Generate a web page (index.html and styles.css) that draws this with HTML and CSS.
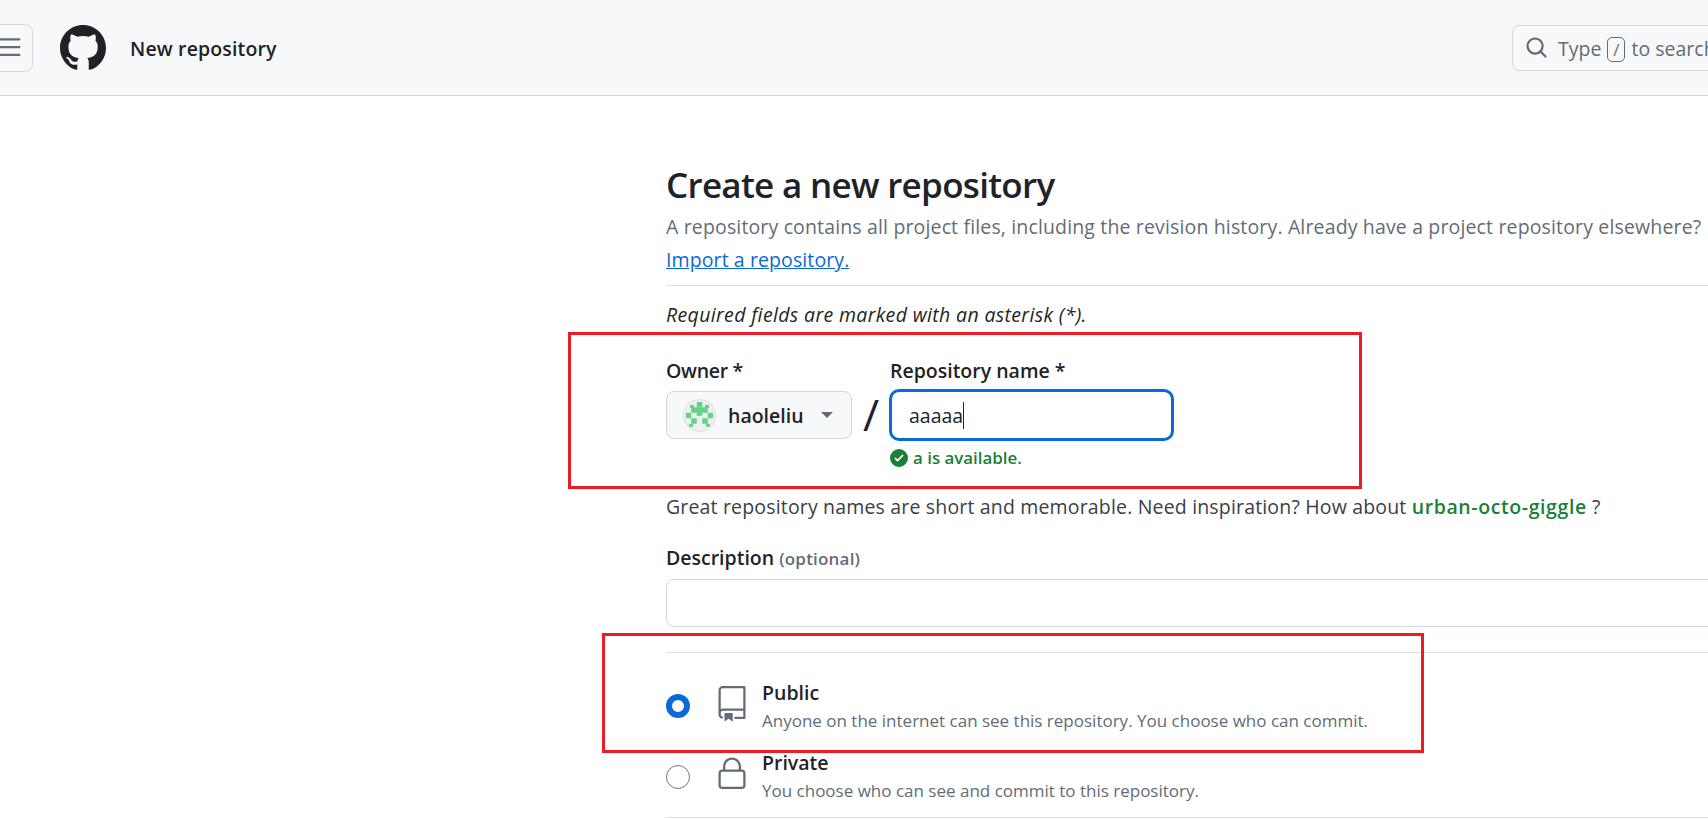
FILE: index.html
```html
<!DOCTYPE html>
<html lang="en">
<head>
    <meta charset="UTF-8">
    <meta name="viewport" content="width=device-width, initial-scale=1.0">
    <title>New repository</title>
    <link rel="stylesheet" href="styles.css">
</head>
<body>
    <header class="topbar">
        <button class="menu-btn" type="button" aria-label="Open menu">
            <svg width="25" height="25" viewBox="0 0 16 16"><path d="M1 2.75A.75.75 0 0 1 1.75 2h12.5a.75.75 0 0 1 0 1.5H1.75A.75.75 0 0 1 1 2.75Zm0 5A.75.75 0 0 1 1.75 7h12.5a.75.75 0 0 1 0 1.5H1.75A.75.75 0 0 1 1 7.75ZM1.75 12h12.5a.75.75 0 0 1 0 1.5H1.75a.75.75 0 0 1 0-1.5Z"/></svg>
        </button>
        <svg class="logo" width="46" height="46" viewBox="0 0 16 16"><path d="M8 0c4.42 0 8 3.58 8 8a8.013 8.013 0 0 1-5.45 7.59c-.4.08-.55-.17-.55-.38 0-.27.01-1.13.01-2.2 0-.75-.25-1.23-.54-1.48 1.78-.2 3.65-.88 3.65-3.95 0-.88-.31-1.59-.82-2.15.08-.2.36-1.02-.08-2.12 0 0-.67-.22-2.2.82-.64-.18-1.32-.27-2-.27-.68 0-1.36.09-2 .27-1.53-1.03-2.2-.82-2.2-.82-.44 1.1-.16 1.92-.08 2.12-.51.56-.82 1.28-.82 2.15 0 3.06 1.86 3.75 3.64 3.95-.23.2-.44.55-.51 1.07-.46.21-1.61.55-2.33-.66-.15-.24-.6-.83-1.23-.82-.67.01-.27.38.01.53.34.19.73.9.82 1.13.16.45.68 1.31 2.69.94 0 .67.01 1.3.01 1.49 0 .21-.15.45-.55.38A7.995 7.995 0 0 1 0 8c0-4.42 3.58-8 8-8Z"/></svg>
        <span class="page-title">New repository</span>
        <div class="search">
            <svg width="23" height="23" viewBox="0 0 16 16"><path d="M10.68 11.74a6 6 0 0 1-7.922-8.982 6 6 0 0 1 8.982 7.922l3.04 3.04a.749.749 0 0 1-.326 1.275.749.749 0 0 1-.734-.215ZM11.5 7a4.499 4.499 0 1 0-8.997 0A4.499 4.499 0 0 0 11.5 7Z"/></svg>
            <span class="search-text">Type <kbd class="slash-key">/</kbd> to search</span>
        </div>
    </header>

    <main class="container">
        <h1>Create a new repository</h1>
        <p class="subhead">A repository contains all project files, including the revision history. Already have a project repository elsewhere?</p>
        <a class="import-link" href="#">Import a repository.</a>
        <hr class="divider divider-top">
        <p class="required-note">Required fields are marked with an asterisk (*).</p>

        <div class="name-row">
            <div class="owner-col">
                <label class="field-label field-owner">Owner *</label>
                <div class="owner-select">
                    <svg class="identicon" width="33" height="33" viewBox="0 0 33 33">
                        <circle cx="16.5" cy="16.5" r="16" fill="#f0f0f0" stroke="#dcdcdc"/>
                        <g fill="#62d384">
                            <rect x="13.75" y="3" width="5.5" height="5.25"/>
                            <rect x="7" y="6" width="4" height="3"/>
                            <rect x="22" y="6" width="4" height="3"/>
                            <rect x="8.25" y="8.25" width="16.5" height="5.5"/>
                            <rect x="3" y="13.75" width="5.25" height="5.5"/>
                            <rect x="24.75" y="13.75" width="5.25" height="5.5"/>
                            <rect x="13.75" y="13.75" width="5.5" height="3"/>
                            <rect x="8.25" y="19.25" width="5.5" height="5.5"/>
                            <rect x="19.25" y="19.25" width="5.5" height="5.5"/>
                            <rect x="6" y="24.75" width="4" height="3"/>
                            <rect x="23" y="24.75" width="4" height="3"/>
                        </g>
                    </svg>
                    <span class="owner-name">haoleliu</span>
                    <span class="caret-down"></span>
                </div>
            </div>
            <span class="slash">/</span>
            <div class="repo-col">
                <label class="field-label">Repository name *</label>
                <div class="text-input text-input-focus"><span class="typed">aaaaa</span></div>
                <div class="available">
                    <svg width="18" height="18" viewBox="0 0 16 16"><path d="M8 16A8 8 0 1 1 8 0a8 8 0 0 1 0 16Zm3.78-9.72a.751.751 0 0 0-.018-1.042.751.751 0 0 0-1.042-.018L6.75 9.19 5.28 7.72a.751.751 0 0 0-1.042.018.751.751 0 0 0-.018 1.042l2 2a.75.75 0 0 0 1.06 0Z"/></svg>
                    a is available.
                </div>
            </div>
        </div>

        <p class="hint">Great repository names are short and memorable. Need inspiration? How about <strong>urban-octo-giggle</strong> ?</p>

        <label class="field-label desc-label">Description <span class="optional">(optional)</span></label>
        <div class="text-input desc-input"></div>
        <hr class="divider divider-mid">

        <div class="visibility visibility-public">
            <span class="radio radio-on"></span>
            <svg class="vis-icon" width="36" height="36" viewBox="0 0 24 24"><path d="M3 2.75A2.75 2.75 0 0 1 5.75 0h14.5a.75.75 0 0 1 .75.75v20.5a.75.75 0 0 1-.75.75h-6a.75.75 0 0 1 0-1.5h5.25v-4H6A1.5 1.5 0 0 0 4.5 18v.75c0 .716.43 1.334 1.05 1.605a.75.75 0 0 1-.6 1.374A3.251 3.251 0 0 1 3 18.75ZM19.5 1.5H5.75c-.69 0-1.25.56-1.25 1.25v12.651A2.989 2.989 0 0 1 6 15h13.5Z"/><path d="M7 18.25a.25.25 0 0 1 .25-.25h5a.25.25 0 0 1 .25.25v5.01a.25.25 0 0 1-.397.201l-2.206-1.604a.25.25 0 0 0-.294 0L7.397 23.46a.25.25 0 0 1-.397-.2Z"/></svg>
            <div class="vis-text">
                <div class="vis-title">Public</div>
                <div class="vis-note">Anyone on the internet can see this repository. You choose who can commit.</div>
            </div>
        </div>
        <div class="visibility visibility-private">
            <span class="radio"></span>
            <svg class="vis-icon" width="36" height="36" viewBox="0 0 24 24"><path d="M6 9V7.25C6 3.845 8.503 1 12 1s6 2.845 6 6.25V9h.5a2.5 2.5 0 0 1 2.5 2.5v8a2.5 2.5 0 0 1-2.5 2.5h-13A2.5 2.5 0 0 1 3 19.5v-8A2.5 2.5 0 0 1 5.5 9Zm-1.5 2.5v8a1 1 0 0 0 1 1h13a1 1 0 0 0 1-1v-8a1 1 0 0 0-1-1h-13a1 1 0 0 0-1 1Zm3-4.25V9h9V7.25c0-2.67-1.922-4.75-4.5-4.75-2.578 0-4.5 2.08-4.5 4.75Z"/></svg>
            <div class="vis-text">
                <div class="vis-title">Private</div>
                <div class="vis-note">You choose who can see and commit to this repository.</div>
            </div>
        </div>
        <hr class="divider divider-end">
    </main>

    <div class="mark mark-name"></div>
    <div class="mark mark-visibility"></div>
</body>
</html>
```

FILE: styles.css
```css
html, body {
    height: 100%;
    overflow: hidden;
}

body {
    font-family: "Open Sans", "Noto Sans", Arial, sans-serif;
    margin: 0;
    padding: 0;
    background-color: #fff;
    color: #1f2328;
    font-size: 19.5px;
}

.topbar {
    display: flex;
    align-items: center;
    height: 95px;
    background-color: #f6f8fa;
    border-bottom: 1px solid #d0d7de;
}

.menu-btn {
    display: flex;
    align-items: center;
    justify-content: flex-end;
    flex-shrink: 0;
    width: 60px;
    height: 48px;
    margin-left: -27px;
    padding: 0 10px 0 0;
    background-color: #f6f8fa;
    border: 1px solid #d0d7de;
    border-radius: 8px;
    fill: #636c76;
}

.logo {
    flex-shrink: 0;
    margin-left: 27px;
    fill: #1f2328;
}

.page-title {
    margin-left: 24px;
    margin-top: 2px;
    font-weight: 600;
    letter-spacing: 0.15px;
}

.search {
    display: flex;
    align-items: center;
    gap: 10px;
    flex-shrink: 0;
    width: 420px;
    height: 46px;
    margin-left: auto;
    margin-right: -224px;
    padding-left: 12px;
    box-sizing: border-box;
    border: 1px solid #d0d7de;
    border-radius: 8px;
    fill: #636c76;
    color: #636c76;
}

.search-text {
    margin-top: 2px;
    white-space: nowrap;
}

.slash-key {
    display: inline-block;
    width: 18px;
    height: 25px;
    margin: 0 1px;
    line-height: 23px;
    text-align: center;
    font-family: inherit;
    font-size: 17px;
    box-sizing: border-box;
    border: 1px solid #636c76;
    border-radius: 5px;
}

.container {
    width: 1200px;
    margin-left: 666px;
}

h1 {
    margin: 64px 0 0;
    font-size: 35px;
    line-height: 50px;
    font-weight: 600;
    letter-spacing: -0.7px;
}

.subhead {
    margin: 0;
    line-height: 33px;
    color: #636c76;
    white-space: nowrap;
    letter-spacing: 0.15px;
}

.import-link {
    display: block;
    line-height: 33px;
    color: #0969da;
    letter-spacing: 0.1px;
}

.divider {
    height: 1px;
    margin: 0;
    border: none;
    background-color: #d8dee4;
}

.divider-top {
    margin-top: 9px;
}

.required-note {
    margin: 16px 0 0;
    line-height: 26px;
    font-style: italic;
    letter-spacing: 0.35px;
}

.name-row {
    display: flex;
    margin-top: 29px;
}

.field-label {
    display: block;
    line-height: 26px;
    font-weight: 600;
}

.name-row .field-label {
    line-height: 28px;
}

.field-owner {
    letter-spacing: -0.3px;
}

.owner-select {
    display: flex;
    align-items: center;
    width: 186px;
    height: 48px;
    margin-top: 6px;
    padding-left: 16px;
    box-sizing: border-box;
    background-color: #f6f8fa;
    border: 1px solid #d0d7de;
    border-radius: 8px;
}

.owner-name {
    margin-left: 12px;
    font-weight: 600;
}

.caret-down {
    width: 0;
    height: 0;
    margin-left: 17px;
    border-left: 6px solid transparent;
    border-right: 6px solid transparent;
    border-top: 6px solid #636c76;
}

.slash {
    width: 38px;
    margin-top: 33px;
    text-align: center;
    font-size: 44px;
    line-height: 48px;
}

.repo-col {
    width: 284px;
}

.text-input {
    box-sizing: border-box;
    border: 1px solid #d0d7de;
    border-radius: 8px;
    background-color: #fff;
}

.text-input-focus {
    display: flex;
    align-items: center;
    height: 52px;
    margin: 4px 0 0 -1px;
    padding-left: 17px;
    border: 3px solid #0969da;
    border-radius: 10px;
}

.typed {
    line-height: 27px;
    border-right: 1px solid #1f2328;
}

.available {
    display: flex;
    align-items: center;
    gap: 5px;
    margin-top: 6px;
    line-height: 22px;
    font-size: 16.9px;
    font-weight: 600;
    color: #1a7f37;
    fill: #1a7f37;
}

.hint {
    margin: 25px 0 0;
    line-height: 26px;
    color: #3a4047;
    letter-spacing: 0.17px;
}

.hint strong {
    color: #1a7f37;
    font-weight: 600;
    letter-spacing: 0.6px;
}

.desc-label {
    margin-top: 25px;
}

.optional {
    font-size: 17px;
    color: #636c76;
    letter-spacing: 0.2px;
}

.desc-input {
    height: 48px;
    margin-top: 7px;
}

.divider-mid {
    margin-top: 25px;
}

.visibility {
    display: flex;
    align-items: center;
}

.visibility-public {
    margin-top: 27px;
}

.visibility-private {
    margin-top: 17px;
}

.radio {
    flex-shrink: 0;
    width: 24px;
    height: 24px;
    box-sizing: border-box;
    border: 1px solid #6e7781;
    border-radius: 50%;
    background-color: #fff;
}

.radio-on {
    margin-top: -2px;
    border: 6px solid #0969da;
}

.vis-icon {
    flex-shrink: 0;
    margin-left: 24px;
    margin-top: -5px;
    fill: #636c76;
}

.vis-text {
    margin-left: 12px;
}

.vis-title {
    line-height: 26px;
    font-weight: 600;
}

.vis-note {
    margin-top: 3px;
    line-height: 24px;
    font-size: 17px;
    color: #636c76;
}

.divider-end {
    margin-top: 14px;
}

/* red boxes drawn over the screenshot */
.mark {
    position: absolute;
    box-sizing: border-box;
    border: 3px solid #ed1c24;
}

.mark-name {
    left: 568px;
    top: 332px;
    width: 794px;
    height: 157px;
}

.mark-visibility {
    left: 602px;
    top: 633px;
    width: 822px;
    height: 120px;
}
```
